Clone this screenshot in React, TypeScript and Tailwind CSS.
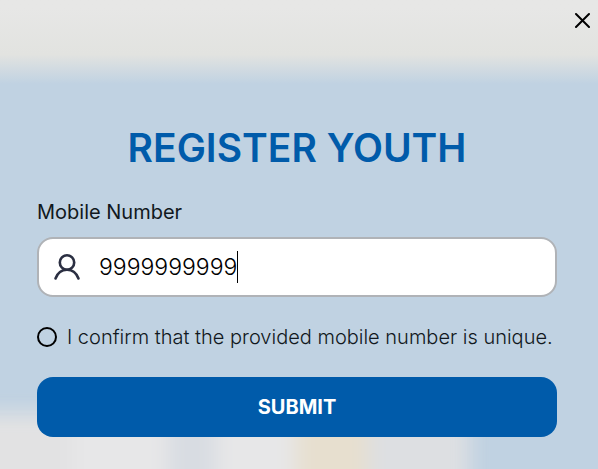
import React, { useState } from 'react';

// Out-of-focus page that shows through behind the modal
const Backdrop: React.FC = () => (
  <div aria-hidden="true" className="absolute inset-0 -z-10 overflow-hidden bg-[#c0d2e2]">
    <div className="absolute inset-x-0 top-0 h-21 bg-linear-to-b from-[#e7e7e6] from-10% via-[#e2e3e0] via-65% to-[#c0d2e2]" />
    <div className="absolute -left-10 -bottom-10 flex h-24 w-[510px] blur-[10px]">
      <div className="w-28 bg-[#e2e2e3]" />
      <div className="w-24 bg-[#e7e7e8]" />
      <div className="w-12 bg-[#d8dce2]" />
      <div className="w-20 bg-[#e7e7e8]" />
      <div className="w-18 bg-[#e7dfcf]" />
      <div className="flex-1 bg-[#dddfe2]" />
    </div>
  </div>
);

const App: React.FC = () => {
  const [mobile, setMobile] = useState('9999999999');
  const [confirmed, setConfirmed] = useState(false);

  return (
    <div className="relative isolate min-h-screen pt-32 pr-[41px] pb-8 pl-[37px] font-['Inter',sans-serif] text-[#111820]">
      <Backdrop />

      <button type="button" aria-label="Close" className="absolute top-3 right-2 text-black">
        <svg className="size-4" fill="none" stroke="currentColor" viewBox="0 0 16 16">
          <path strokeLinecap="round" strokeWidth={2} d="M2 2l13 13M15 2L2 15" />
        </svg>
      </button>

      <form className="flex flex-col" onSubmit={(e) => e.preventDefault()}>
        <h1 className="text-center text-[39px] leading-10 font-semibold text-[#005baa]">
          REGISTER YOUTH
        </h1>

        <label htmlFor="mobile" className="mt-8 text-xl leading-6">
          Mobile Number
        </label>
        <label
          htmlFor="mobile"
          className="mt-[13px] flex h-15 items-center rounded-2xl border-2 border-[#b0b3b7] bg-white pl-3.5"
        >
          <svg className="mr-[18px] size-7 text-[#2b2f42]" fill="none" stroke="currentColor" viewBox="0 0 28 28">
            <circle cx="14" cy="9.5" r="7.2" strokeWidth={2.6} />
            <path strokeLinecap="round" strokeWidth={2.6} d="M2.500 25.500c2-5.500 6.500-8.800 11.500-8.800s9.500 3.300 11.500 8.800" />
          </svg>
          <input
            id="mobile"
            type="text"
            inputMode="numeric"
            value={mobile}
            onChange={(e) => setMobile(e.target.value)}
            className="field-sizing-content text-[23px] leading-8 font-light text-black caret-transparent outline-none"
          />
          <span className="h-8 w-px bg-black" />
        </label>

        <div className="mt-7 flex items-center gap-2.5">
          <input
            id="unique"
            type="checkbox"
            checked={confirmed}
            onChange={(e) => setConfirmed(e.target.checked)}
            className="size-5 shrink-0 appearance-none rounded-full border-2 border-black checked:bg-[#005baa]"
          />
          <label htmlFor="unique" className="text-xl leading-6 font-light">
            I confirm that the provided mobile number is unique.
          </label>
        </div>

        <button
          type="submit"
          className="mt-7 h-15 rounded-2xl bg-[#005baa] text-xl leading-6 font-bold text-white"
        >
          SUBMIT
        </button>
      </form>
    </div>
  );
};

export default App;
